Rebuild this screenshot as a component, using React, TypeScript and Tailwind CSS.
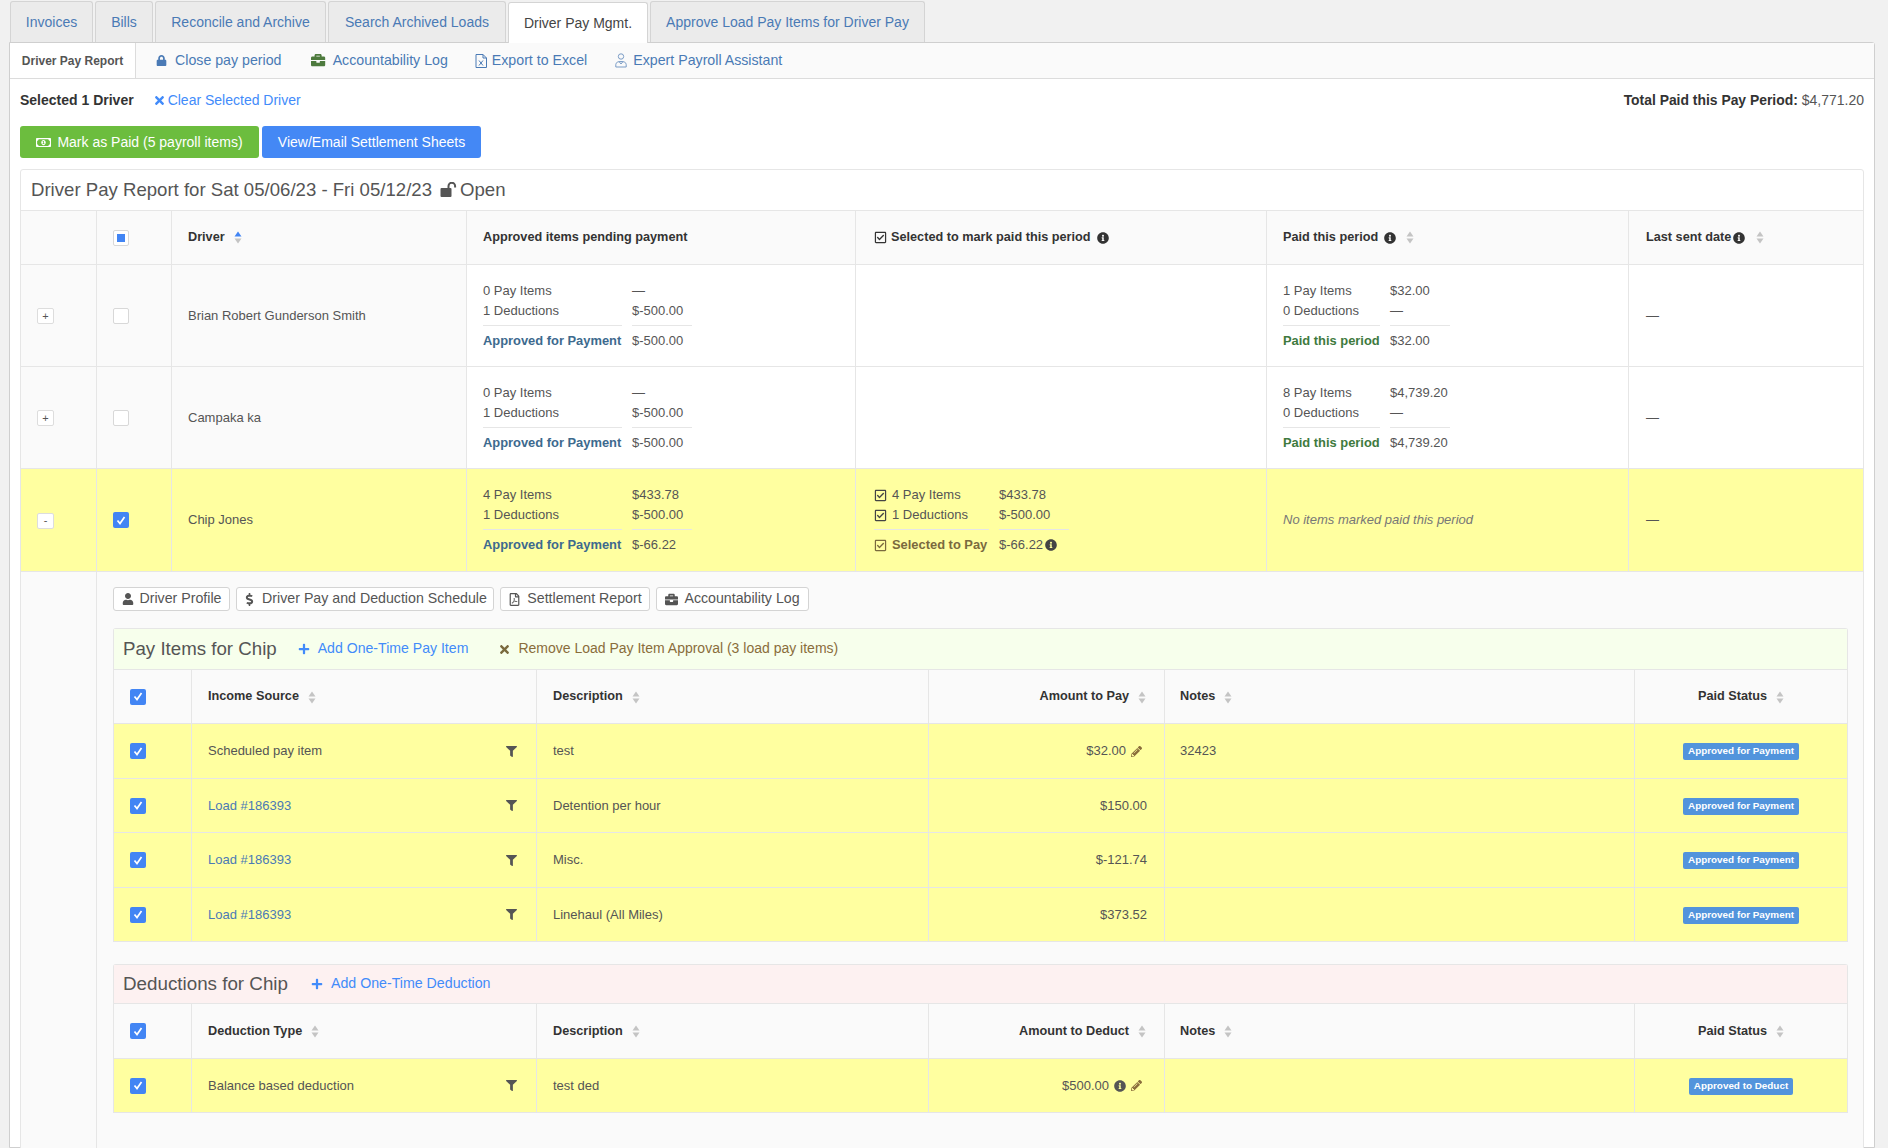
import React from "react";
import { FaLock, FaBriefcase, FaRegFilePdf, FaTimes, FaRegMoneyBillAlt, FaInfoCircle, FaRegCheckSquare, FaUser, FaDollarSign, FaPlus, FaFilter, FaPencilAlt } from "react-icons/fa";

const Sort = ({ active = false }: { active?: boolean }) => (
  <svg width="8" height="13" viewBox="0 0 8 13" className="inline-block shrink-0">
    <path d="M4 0.5 L7.5 5.5 L0.5 5.5 Z" fill={active ? "#4285f4" : "#c4c4c4"} />
    <path d="M4 12.5 L7.5 7.5 L0.5 7.5 Z" fill="#c4c4c4" />
  </svg>
);

const Check = ({ on = true, mixed = false }: { on?: boolean; mixed?: boolean }) =>
  mixed ? (
    <span className="flex h-[16px] w-[16px] items-center justify-center rounded-[2px] border border-[#d8d8d8] bg-white">
      <span className="h-[8px] w-[8px] bg-[#4285f4]" />
    </span>
  ) : on ? (
    <span className="flex h-[16px] w-[16px] items-center justify-center rounded-[2px] bg-[#4285f4]">
      <svg width="10" height="9" viewBox="0 0 10 9"><path d="M1.5 4.5 L4 7.5 L8.5 1" stroke="#fff" strokeWidth="1.7" fill="none" /></svg>
    </span>
  ) : (
    <span className="block h-[16px] w-[16px] rounded-[2px] border border-[#d8d8d8] bg-white" />
  );

const Tab = ({ label, w, active = false }: { label: string; w: string; active?: boolean }) => (
  <div className={(active
    ? "relative top-[1px] z-10 flex h-[41px] items-center justify-center rounded-t-[3px] border border-b-0 border-[#d4d4d4] bg-white text-[#444] "
    : "flex h-[41px] items-center justify-center rounded-t-[3px] border border-b-0 border-[#d4d4d4] bg-[#ebebeb] text-[#4a7ab5] ") + w}>{label}</div>
);

const Info = ({ className = "" }: { className?: string }) => <FaInfoCircle className={"inline-block text-[12px] " + className} />;

const Unlock = () => (
  <svg width="18" height="15" viewBox="0 0 18 15" className="shrink-0">
    <rect x="0.500" y="6" width="11" height="9" rx="1" fill="#555" />
    <path d="M8.500 6.500V4a3.300 3.300 0 0 1 6.600 0v1.500" fill="none" stroke="#555" strokeWidth="2" />
  </svg>
);

const Summary = ({ rows, total, totalClass, check = false, valueW = 60, labelW, note = false }: { rows: [string, string][]; total: [string, string]; totalClass: string; check?: boolean; valueW?: number; labelW?: number; note?: boolean }) => (
  <div className="text-[13px] leading-[20px]">
    {rows.map(([a, b]) => (
      <div key={a} className="flex h-[20px] items-center">
        <div style={{ width: labelW }} className="flex shrink-0 items-center whitespace-nowrap">
          {check && <FaRegCheckSquare className="mr-[5px] text-[13px] text-[#444]" />}
          {a}
        </div>
        <div className="ml-[10px] whitespace-nowrap">{b}</div>
      </div>
    ))}
    <div className="mt-[4px] flex">
      <div style={{ width: labelW }} className="h-[1px] shrink-0 bg-[#e6e6e6]" />
      <div style={{ width: valueW }} className="ml-[10px] h-[1px] bg-[#e6e6e6]" />
    </div>
    <div className="mt-[5px] flex h-[20px] items-center">
      <div style={{ width: labelW }} className={"flex shrink-0 items-center whitespace-nowrap text-[12.9px] font-bold " + totalClass}>
        {check && <FaRegCheckSquare className="mr-[5px] text-[13px] font-normal" />}
        {total[0]}
      </div>
      <div className="ml-[10px] flex items-center whitespace-nowrap">{total[1]}{note && <Info className="ml-[2px] text-[#444]" />}</div>
    </div>
  </div>
);

const driverCols = "grid grid-cols-[76px_75px_295px_389px_411px_362px_235px]";
const itemCols = "grid grid-cols-[78px_345px_392px_236px_470px_212px]";

const cell = "flex items-center border-r border-[#e6e6e6] last:border-r-0";

const DriverRow = ({ expand, checked, name, a, b, c, yellow = false, h }: { expand: string; checked: boolean; name: string; a: React.ReactNode; b?: React.ReactNode; c: React.ReactNode; yellow?: boolean; h: string }) => (
  <div className={driverCols + " border-b border-[#e6e6e6] text-[13px] text-[#555] " + h + (yellow ? " bg-[#ffffa0]" : " bg-white")}>
    <div className={cell + " pl-[16px] pt-[1px] " + (yellow ? "" : "bg-[#fafafa]")}>
      <span className="flex h-[16px] w-[17px] items-center justify-center rounded-[2px] border border-[#ddd] bg-white text-[11px] text-[#555]">{expand}</span>
    </div>
    <div className={cell + " pl-[16px] " + (yellow ? "" : "bg-[#fafafa]")}><Check on={checked} /></div>
    <div className={cell + " pl-[16px] " + (yellow ? "" : "bg-[#fafafa]")}>{name}</div>
    <div className={cell + " pl-[16px]"}>{a}</div>
    <div className={cell + " pl-[18px]"}>{b}</div>
    <div className={cell + " pl-[16px]"}>{c}</div>
    <div className={cell + " pl-[17px]"}>—</div>
  </div>
);

const Th = ({ children, className = "" }: { children: React.ReactNode; className?: string }) => (
  <div className={cell + " font-bold text-[#333] " + className}>{children}</div>
);

const ItemHeader = ({ source, amount, h }: { source: string; amount: string; h: string }) => (
  <div className={itemCols + " border-b border-[#e6e6e6] bg-[#fafafa] text-[12.7px] " + h}>
    <div className={cell + " pl-[16px]"}><Check /></div>
    <Th className="gap-[9px] pl-[16px] pt-[1px]">{source}<Sort /></Th>
    <Th className="gap-[9px] pl-[16px] pt-[1px]">Description<Sort /></Th>
    <Th className="justify-end gap-[9px] pr-[18px] pt-[1px]">{amount}<Sort /></Th>
    <Th className="gap-[9px] pl-[15px] pt-[1px]">Notes<Sort /></Th>
    <Th className="justify-center gap-[9px] pt-[1px]">Paid Status<Sort /></Th>
  </div>
);

const ItemRow = ({ source, link = false, desc, amount, notes, extra, badge, h }: { source: string; link?: boolean; desc: string; amount: string; notes?: string; extra?: React.ReactNode; badge: string; h: string }) => (
  <div className={itemCols + " border-b border-[#e6e6e6] bg-[#ffffa0] text-[13px] text-[#555] " + h}>
    <div className={cell + " pl-[16px]"}><Check /></div>
    <div className={cell + " justify-between pl-[16px] pr-[19px]"}>
      <span className={link ? "text-[#4a7ab5]" : ""}>{source}</span>
      <FaFilter className="text-[11px] text-[#555]" />
    </div>
    <div className={cell + " pl-[16px]"}>{desc}</div>
    <div className={cell + " justify-end gap-[5px] " + (extra ? "pr-[22px]" : "pr-[17px]")}>{amount}{extra}</div>
    <div className={cell + " pl-[15px]"}>{notes}</div>
    <div className={cell + " justify-center"}>
      <span className="mt-[1px] flex h-[17px] items-center rounded-[2px] bg-[#5294dc] px-[5px] text-[9.9px] font-bold text-white">{badge}</span>
    </div>
  </div>
);

const Pencil = () => <FaPencilAlt className="text-[11px] text-[#8a6d3b]" />;

const ToolBtn = ({ icon, label, w }: { icon: React.ReactNode; label: string; w: string }) => (
  <div className={"flex h-[24px] items-center justify-center gap-[6px] rounded-[3px] border border-[#d4d4d4] bg-white text-[14.2px] text-[#555] " + w}>{icon}{label}</div>
);

export default function App() {
  return (
    <div className="h-[1148px] overflow-hidden bg-[#f1f1f1] [font-family:Liberation_Sans,sans-serif] text-[14px] text-[#333]">
      <div className="flex gap-[2px] pl-[10px] pt-[1px]">
        <Tab label="Invoices" w="w-[83px]" />
        <Tab label="Bills" w="w-[58px]" />
        <Tab label="Reconcile and Archive" w="w-[171px]" />
        <Tab label="Search Archived Loads" w="w-[178px]" />
        <Tab label="Driver Pay Mgmt." w="w-[140px]" active />
        <Tab label="Approve Load Pay Items for Driver Pay" w="w-[275px]" />
      </div>
      <div className="ml-[9px] h-[1106px] w-[1866px] rounded-tr-[3px] border border-[#cfcfcf] bg-white">
        <div className="flex h-[36px] items-center border-b border-[#dcdcdc] bg-[#fafafa] text-[14.2px] text-[#4a7ab5]">
          <div className="flex h-full w-[126px] items-center justify-center border-r border-[#dcdcdc] bg-white text-[12px] font-bold text-[#555]">Driver Pay Report</div>
          <FaLock className="ml-[20px] text-[11px]" />
          <span className="ml-[8px] pt-[1px]">Close pay period</span>
          <FaBriefcase className="ml-[30px] text-[#4d7a3d]" />
          <span className="ml-[7px] pt-[1px]">Accountability Log</span>
          <svg width="12" height="14" viewBox="0 0 12 14" className="ml-[27px]"><path d="M1 .5h7l3.500 3.500v9.500H1z M8 .5V4h3.500" fill="none" stroke="#4a7ab5" /><path d="M4 6.500l4 5M8 6.500l-4 5" stroke="#4a7ab5" /></svg>
          <span className="ml-[5px] pt-[1px]">Export to Excel</span>
          <svg width="12" height="15" viewBox="0 0 12 15" className="ml-[28px]"><circle cx="6" cy="3.500" r="2.700" fill="none" stroke="#7a9cc6" /><path d="M.8 14v-2.500c0-2 2-3 5.200-3s5.200 1 5.200 3V14zM4 8.500L6 11l2-2.500" fill="none" stroke="#7a9cc6" /></svg>
          <span className="ml-[6px] pt-[1px]">Expert Payroll Assistant</span>
        </div>
        <div className="flex h-[47px] items-center justify-between px-[10px] pb-[5px] text-[14px]">
          <div className="flex items-center">
            <b className="text-[#333]">Selected 1 Driver</b>
            <FaTimes className="ml-[19px] text-[13px] text-[#428bfa]" />
            <span className="ml-[2px] text-[#428bfa]">Clear Selected Driver</span>
          </div>
          <div><b className="text-[13.9px]">Total Paid this Pay Period:</b> <span className="text-[#555]">$4,771.20</span></div>
        </div>
        <div className="flex h-[32px] gap-[3px] pl-[10px] font-normal text-white">
          <div className="flex w-[239px] items-center justify-center gap-[6px] rounded-[3px] bg-[#6cbd3e]"><FaRegMoneyBillAlt className="text-[15px]" />Mark as Paid (5 payroll items)</div>
          <div className="flex w-[219px] items-center justify-center rounded-[3px] bg-[#4488f5]">View/Email Settlement Sheets</div>
        </div>
        <div className="mx-[10px] mt-[11px] rounded-t-[3px] border border-[#e6e6e6] bg-white">
          <div className="flex h-[41px] items-center gap-[8px] border-b border-[#e6e6e6] pl-[10px] text-[18.6px] text-[#555]">
            <span>Driver Pay Report for Sat 05/06/23 - Fri 05/12/23</span>
            <span className="flex items-center gap-[2px]"><Unlock />Open</span>
          </div>
          <div className={driverCols + " h-[54px] border-b border-[#e6e6e6] bg-[#fafafa] text-[12.7px]"}>
            <div className={cell} />
            <div className={cell + " pl-[16px]"}><Check mixed /></div>
            <Th className="gap-[9px] pl-[16px]">Driver<Sort active /></Th>
            <Th className="pl-[16px]">Approved items pending payment</Th>
            <Th className="gap-[6px] pl-[18px]"><FaRegCheckSquare className="mr-[-2px] text-[13px] font-normal" />Selected to mark paid this period<Info /></Th>
            <Th className="gap-[6px] pl-[16px]">Paid this period<Info className="mr-[4px]" /><Sort /></Th>
            <Th className="gap-[2px] pl-[17px]"><span>Last sent date</span><Info className="mr-[9px]" /><Sort /></Th>
          </div>
          <DriverRow h="h-[102px]" expand="+" checked={false} name="Brian Robert Gunderson Smith"
            a={<Summary labelW={139} rows={[["0 Pay Items", "—"], ["1 Deductions", "$-500.00"]]} total={["Approved for Payment", "$-500.00"]} totalClass="text-[#3d6a8e]" />}
            c={<Summary labelW={97} rows={[["1 Pay Items", "$32.00"], ["0 Deductions", "—"]]} total={["Paid this period", "$32.00"]} totalClass="text-[#3e7a3e]" />} />
          <DriverRow h="h-[102px]" expand="+" checked={false} name="Campaka ka"
            a={<Summary labelW={139} rows={[["0 Pay Items", "—"], ["1 Deductions", "$-500.00"]]} total={["Approved for Payment", "$-500.00"]} totalClass="text-[#3d6a8e]" />}
            c={<Summary labelW={97} rows={[["8 Pay Items", "$4,739.20"], ["0 Deductions", "—"]]} total={["Paid this period", "$4,739.20"]} totalClass="text-[#3e7a3e]" />} />
          <DriverRow h="h-[103px]" yellow expand="-" checked name="Chip Jones"
            a={<Summary labelW={139} rows={[["4 Pay Items", "$433.78"], ["1 Deductions", "$-500.00"]]} total={["Approved for Payment", "$-66.22"]} totalClass="text-[#3d6a8e]" />}
            b={<Summary check labelW={115} valueW={70} note rows={[["4 Pay Items", "$433.78"], ["1 Deductions", "$-500.00"]]} total={["Selected to Pay", "$-66.22"]} totalClass="text-[#7a6a3e]" />}
            c={<i className="text-[#777]">No items marked paid this period</i>} />
          <div className="grid h-[600px] grid-cols-[76px_1fr] bg-[#fafafa]">
            <div className="border-r border-[#e6e6e6]" />
            <div className="pl-[16px] pr-[16px] pt-[15px]">
              <div className="flex gap-[6px]">
                <ToolBtn w="w-[117px]" icon={<FaUser className="text-[12px]" />} label="Driver Profile" />
                <ToolBtn w="w-[258px]" icon={<FaDollarSign className="text-[13px]" />} label="Driver Pay and Deduction Schedule" />
                <ToolBtn w="w-[150px]" icon={<FaRegFilePdf className="text-[13px]" />} label="Settlement Report" />
                <ToolBtn w="w-[153px]" icon={<FaBriefcase className="text-[13px]" />} label="Accountability Log" />
              </div>
              <div className="mt-[17px] rounded-t-[3px] border border-[#e6e6e6] border-b-0">
                <div className="flex h-[41px] items-center border-b border-[#e6e6e6] bg-[#f7ffec] pl-[9px] text-[14px]">
                  <span className="mr-[21px] text-[18.7px] text-[#555]">Pay Items for Chip</span>
                  <FaPlus className="mr-[8px] text-[12px] text-[#428bfa]" />
                  <span className="pb-[1px] text-[14.1px] text-[#428bfa]">Add One-Time Pay Item</span>
                  <FaTimes className="ml-[30px] mr-[7px] text-[13px] text-[#7a6a3e]" />
                  <span className="pb-[1px] text-[#8a6d3b]">Remove Load Pay Item Approval (3 load pay items)</span>
                </div>
                <ItemHeader h="h-[54px]" source="Income Source" amount="Amount to Pay" />
                <ItemRow h="h-[55px]" source="Scheduled pay item" desc="test" amount="$32.00" notes="32423" extra={<Pencil />} badge="Approved for Payment" />
                <ItemRow h="h-[54px]" source="Load #186393" link desc="Detention per hour" amount="$150.00" badge="Approved for Payment" />
                <ItemRow h="h-[55px]" source="Load #186393" link desc="Misc." amount="$-121.74" badge="Approved for Payment" />
                <ItemRow h="h-[54px]" source="Load #186393" link desc="Linehaul (All Miles)" amount="$373.52" badge="Approved for Payment" />
              </div>
              <div className="mt-[22px] rounded-t-[3px] border border-[#e6e6e6] border-b-0">
                <div className="flex h-[39px] items-center border-b border-[#e6e6e6] bg-[#fdf1f1] pl-[9px] text-[14.2px]">
                  <span className="mr-[23px] text-[18.8px] text-[#555]">Deductions for Chip</span>
                  <FaPlus className="mr-[8px] text-[12px] text-[#428bfa]" />
                  <span className="pb-[1px] text-[#428bfa]">Add One-Time Deduction</span>
                </div>
                <ItemHeader h="h-[55px]" source="Deduction Type" amount="Amount to Deduct" />
                <ItemRow h="h-[54px]" source="Balance based deduction" desc="test ded" amount="$500.00" extra={<><Info className="text-[#555]" /><Pencil /></>} badge="Approved to Deduct" />
              </div>
            </div>
          </div>
        </div>
      </div>
    </div>
  );
}
